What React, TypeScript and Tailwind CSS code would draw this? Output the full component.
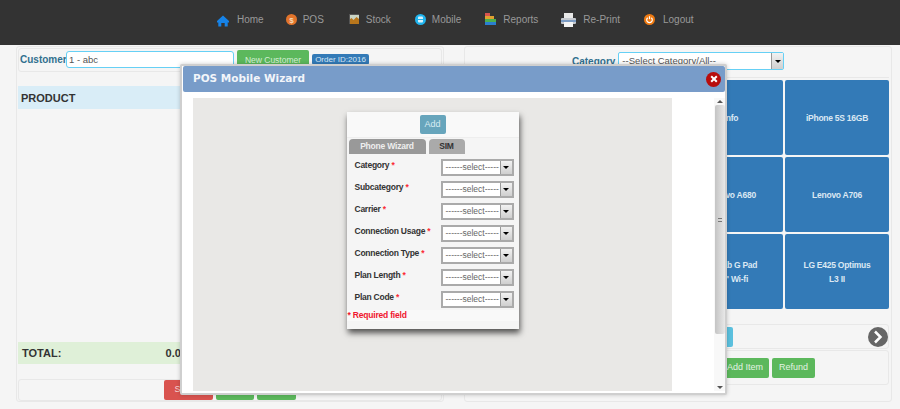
import React from "react";

const NAV: { label: string; icon: React.ReactNode; gap: string; ml: string }[] = [
  {
    label: "Home",
    gap: "gap-2",
    ml: "ml-0",
    icon: (
      <svg className="mt-[3px]" width="12" height="12" viewBox="0 0 12 12">
        <path d="M6 .5 0 6v1.400h1.300V11.500h3V8h3.400v3.500h3V7.400H12V6z" fill="#1683e8" />
      </svg>
    ),
  },
  {
    label: "POS",
    gap: "gap-[6px]",
    ml: "ml-[22px]",
    icon: (
      <svg className="mt-[1px]" width="11" height="11" viewBox="0 0 11 11">
        <circle cx="5.500" cy="5.500" r="5.500" fill="#e2742b" />
        <text x="5.500" y="8.500" fontSize="8" fontWeight="700" textAnchor="middle" fill="#f6d9b8" fontFamily="Liberation Sans">$</text>
      </svg>
    ),
  },
  {
    label: "Stock",
    gap: "gap-[7px]",
    ml: "ml-[25px]",
    icon: (
      <svg width="10" height="10" viewBox="0 0 10 10">
        <rect width="10" height="10" fill="#c9d4c4" />
        <path d="M0 10V6l2.500-2 2 2 3-3L10 5v5z" fill="#b8761c" />
        <path d="M0 0h10v1H0zM0 0h1v10H0z" fill="#555" />
      </svg>
    ),
  },
  {
    label: "Mobile",
    gap: "gap-[6px]",
    ml: "ml-[24px]",
    icon: (
      <svg className="mt-[1px]" width="11" height="11" viewBox="0 0 11 11">
        <circle cx="5.500" cy="5.500" r="5.500" fill="#1fb4ee" />
        <rect x="3" y="2.500" width="5" height="6" rx="1" fill="#d8f1fb" />
        <path d="M3 5.500h5" stroke="#1fb4ee" />
      </svg>
    ),
  },
  {
    label: "Reports",
    gap: "gap-[7px]",
    ml: "ml-[24px]",
    icon: (
      <svg width="11" height="12" viewBox="0 0 11 12">
        <rect width="5" height="3" fill="#d9534f" />
        <rect y="3" width="9" height="3" fill="#e0a030" />
        <rect y="6" width="11" height="3" fill="#4cae4c" />
        <rect y="9" width="11" height="3" fill="#2a7fd0" />
      </svg>
    ),
  },
  {
    label: "Re-Print",
    gap: "gap-[7px]",
    ml: "ml-[23px]",
    icon: (
      <svg className="mt-[2px]" width="15" height="14" viewBox="0 0 15 14">
        <rect x="3" y="0" width="9" height="5" fill="#e8e8e8" />
        <rect y="5" width="15" height="6" rx="1" fill="#c4c8ce" />
        <rect y="7" width="15" height="2" fill="#7c9cc4" />
        <rect x="3" y="9" width="9" height="5" fill="#f4f4f4" />
      </svg>
    ),
  },
  {
    label: "Logout",
    gap: "gap-2",
    ml: "ml-[24px]",
    icon: (
      <svg className="mt-[1px]" width="11" height="11" viewBox="0 0 11 11">
        <circle cx="5.500" cy="5.500" r="5.500" fill="#ee7a12" />
        <path d="M3.700 3.700a2.800 2.800 0 1 0 3.600 0" fill="none" stroke="#fff" strokeWidth="1.200" />
        <path d="M5.500 2.200v3" stroke="#fff" strokeWidth="1.200" />
      </svg>
    ),
  },
];

const TILES = [
  ["Sony Xperia"], ["Galaxy S4"], ["Info"], ["iPhone 5S 16GB"],
  ["Nokia Lumia"], ["Moto G"], ["Lenovo A680"], ["Lenovo A706"],
  ["HTC Desire"], ["Alcatel One"], ["LG Tab G Pad", '8.0" Wi-fi'], ["LG E425 Optimus", "L3 II"],
];

const FIELDS = ["Category", "Subcategory", "Carrier", "Connection Usage", "Connection Type", "Plan Length", "Plan Code"];

function Arrow() {
  return (
    <span className="flex h-full w-[12px] shrink-0 items-center justify-center border-l border-[#999] bg-gradient-to-b from-[#f2f2f2] to-[#cfcfcf]">
      <span className="h-0 w-0 border-x-[3px] border-t-[3px] border-x-transparent border-t-black" />
    </span>
  );
}

function Wizard() {
  return (
    <div className="absolute left-[180px] top-[64px] flex h-[331px] w-[547px] flex-col rounded-[2px] border-2 border-[#cfcfcf] bg-white shadow-[0_0_4px_rgba(0,0,0,0.2)]">
      <div className="ml-px flex h-[26px] shrink-0 items-center justify-between rounded-[2px] bg-[#789cc9] pl-[10px] pr-[4px] font-['DejaVu_Sans',sans-serif] text-[10.500px] font-bold text-[#f2f5fa]">
        <span>POS Mobile Wizard</span>
        <span className="flex h-[15px] w-[15px] items-center justify-center rounded-full bg-[#b80d0d]">
          <svg width="8" height="8" viewBox="0 0 8 8">
            <path d="M1.200 1.200 6.800 6.800M6.800 1.200 1.200 6.800" stroke="#fff" strokeWidth="2" />
          </svg>
        </span>
      </div>
      <div className="flex min-h-0 flex-1 pb-[2px] pl-[11px] pt-[6px]">
        <div className="flex w-[479px] justify-center bg-[#e9e8e6] pt-[14px]">
          <div className="h-[217px] w-[172px] bg-[#f5f5f5] shadow-[1px_4px_6px_rgba(0,0,0,0.65)]">
            <div className="flex h-[26px] items-start justify-center border-b border-[#eee] bg-[#f9f9f9] pt-[3px]">
              <span className="flex h-[19px] w-[26px] items-center justify-center rounded-[2px] bg-[#67a5bc] text-[9px] text-[#d9ecf2]">Add</span>
            </div>
            <div className="flex h-[16px] items-end gap-[3px] pl-[2px] text-[8.500px] font-bold tracking-[-0.2px]">
              <span className="flex h-[15px] w-[77px] items-center justify-center rounded-t-[4px] bg-[#999] text-[#eee]">Phone Wizard</span>
              <span className="flex h-[15px] w-[36px] items-center justify-center rounded-t-[4px] bg-[#aaa] text-[#333]">SIM</span>
            </div>
            <div className="flex flex-col gap-[5px] pl-[8px] pr-[5px] pt-[5px]">
              {FIELDS.map((f) => (
                <div key={f} className="flex h-[17px] items-start justify-between">
                  <span className="whitespace-nowrap text-[8.500px] font-bold leading-[12px] tracking-[-0.25px] text-[#333]">
                    {f} <span className="text-red-500">*</span>
                  </span>
                  <div className="flex h-[17px] w-[73px] items-center border-2 border-[#aaa] bg-white">
                    <span className="flex-1 whitespace-nowrap pl-[3px] text-[8.500px] text-[#666]">------select-----</span>
                    <Arrow />
                  </div>
                </div>
              ))}
            </div>
            <div className="mt-[2px] whitespace-nowrap bg-[#f9f9f9] pl-px text-[8.500px] font-bold leading-[11px] tracking-[-0.2px] text-[#f0162f]">* Required field</div>
          </div>
        </div>
        <div className="ml-auto flex w-[11px] flex-col items-center bg-[#f8f8f8]">
          <span className="mt-[2px] h-0 w-0 border-x-[3px] border-b-[3px] border-x-transparent border-b-[#555]" />
          <div className="mt-[2px] flex h-[229px] w-[10px] items-center justify-center rounded-[2px] bg-gradient-to-r from-[#c4c4c4] to-[#e8e8e8]">
            <span className="h-[4px] w-[4px] border-y border-[#777]" />
          </div>
          <span className="mb-[2px] mt-auto h-0 w-0 border-x-[3px] border-t-[3px] border-x-transparent border-t-[#555]" />
        </div>
      </div>
    </div>
  );
}

export default function App() {
  return (
    <div className="relative h-[409px] w-[900px] overflow-hidden bg-[#f5f5f5] font-['Liberation_Sans',Arial,sans-serif]">
      <nav className="flex h-[45px] items-center bg-[#333] pb-[7px] pl-[217px] text-[10px] text-[#999]">
        {NAV.map((n) => (
          <a key={n.label} className={`flex items-center ${n.gap} ${n.ml}`}>
            {n.icon}
            <span>{n.label}</span>
          </a>
        ))}
      </nav>

      <div className="flex gap-[20px] pl-4 pt-px">
        {/* order side */}
        <section className="flex h-[356px] w-[428px] shrink-0 flex-col rounded-[3px] border border-[#e8e8e8] px-px pt-px">
          <div className="flex h-[24px] items-center rounded-[3px] border border-[#e8e8e8] pl-px">
            <b className="w-[46px] whitespace-nowrap text-[10px] text-[#31708f]">Customer</b>
            <span className="flex h-[17px] w-[168px] items-center rounded-[3px] border border-[#66d0f5] bg-white pl-[2px] text-[9.500px] text-[#555]">1 - abc</span>
            <span className="ml-[3px] flex h-[20px] w-[72px] items-center justify-center rounded-[2px] bg-[#5cb85c] text-[8.500px] text-[#d6efd6]">New Customer</span>
            <span className="ml-[3px] flex h-[11px] w-[57px] items-center justify-center rounded-[2px] bg-[#337ab7] text-[8px] text-[#d6e6f5]">Order ID:2016</span>
          </div>
          <div className="mt-[14px] flex h-[24px] items-center bg-[#d9edf7] pl-[3px] pt-px text-[11px] font-bold text-[#333]">PRODUCT</div>
          <div className="mt-[233px] flex h-[22px] items-center justify-between bg-[#dff0d8] pl-[4px] pr-[255px] text-[11px] font-bold text-[#333]">
            <span>TOTAL:</span>
            <span>0.00</span>
          </div>
          <div className="mt-[15px] flex h-[22px] items-center gap-[3px] rounded-[3px] border border-[#e8e8e8] pl-[145px]">
            <span className="flex h-full w-[49px] items-center justify-center rounded-[2px] bg-[#d9534f] text-[9px] text-[#f5d5d4]">Submit</span>
            <span className="h-full w-[38px] rounded-[2px] bg-[#5cb85c]" />
            <span className="h-full w-[39px] rounded-[2px] bg-[#5cb85c]" />
          </div>
        </section>

        {/* catalogue side */}
        <section className="flex h-[356px] w-[428px] shrink-0 flex-col rounded-[3px] border border-[#e8e8e8] px-[2px]">
          <div className="flex h-[30px] items-center pb-[2px] pl-[105px]">
            <b className="text-[10px] text-[#31708f]">Category</b>
            <div className="ml-[3px] flex h-[18px] w-[166px] items-center rounded-[2px] border border-[#66d0f5] bg-white">
              <span className="flex-1 whitespace-nowrap pl-[3px] text-[9.500px] text-[#555]">--Select Category/All--</span>
              <Arrow />
            </div>
          </div>
          <div className="grid grid-cols-[repeat(4,104px)] gap-[2px] border-t border-[#e8e8e8] pt-[2px]">
            {TILES.map((t, i) => (
              <div key={i} className="flex h-[75px] flex-col items-center justify-center rounded-[2px] bg-[#337ab7] pt-px text-[8.500px] font-bold leading-[14px] tracking-[-0.25px] text-[#dbe8f3]">
                {t.map((line) => (
                  <span key={line}>{line}</span>
                ))}
              </div>
            ))}
          </div>
          <div className="mt-[15px] flex h-[25px] items-center justify-between rounded-[3px] border border-[#e8e8e8]">
            <span className="ml-[220px] h-[20px] w-[45px] rounded-[2px] bg-[#5bc0de]" />
            <span className="flex h-[20px] w-[20px] items-center justify-center rounded-full bg-[#666]">
              <svg width="10" height="14" viewBox="0 0 10 14">
                <path d="M2 1.500 7.500 7 2 12.500" fill="none" stroke="#fff" strokeWidth="2.500" />
              </svg>
            </span>
          </div>
          <div className="mt-px flex h-[35px] items-center gap-[3px] rounded-[3px] border border-[#e8e8e8] pl-[219px]">
            <span className="flex h-[20px] w-[82px] items-center justify-end rounded-[2px] bg-[#5cb85c] pr-[6px] text-[9px] text-[#e2f3e2]">Add Item</span>
            <span className="flex h-[20px] w-[43px] items-center justify-center rounded-[2px] bg-[#5cb85c] text-[9px] text-[#e2f3e2]">Refund</span>
          </div>
        </section>
      </div>

      <Wizard />
    </div>
  );
}
